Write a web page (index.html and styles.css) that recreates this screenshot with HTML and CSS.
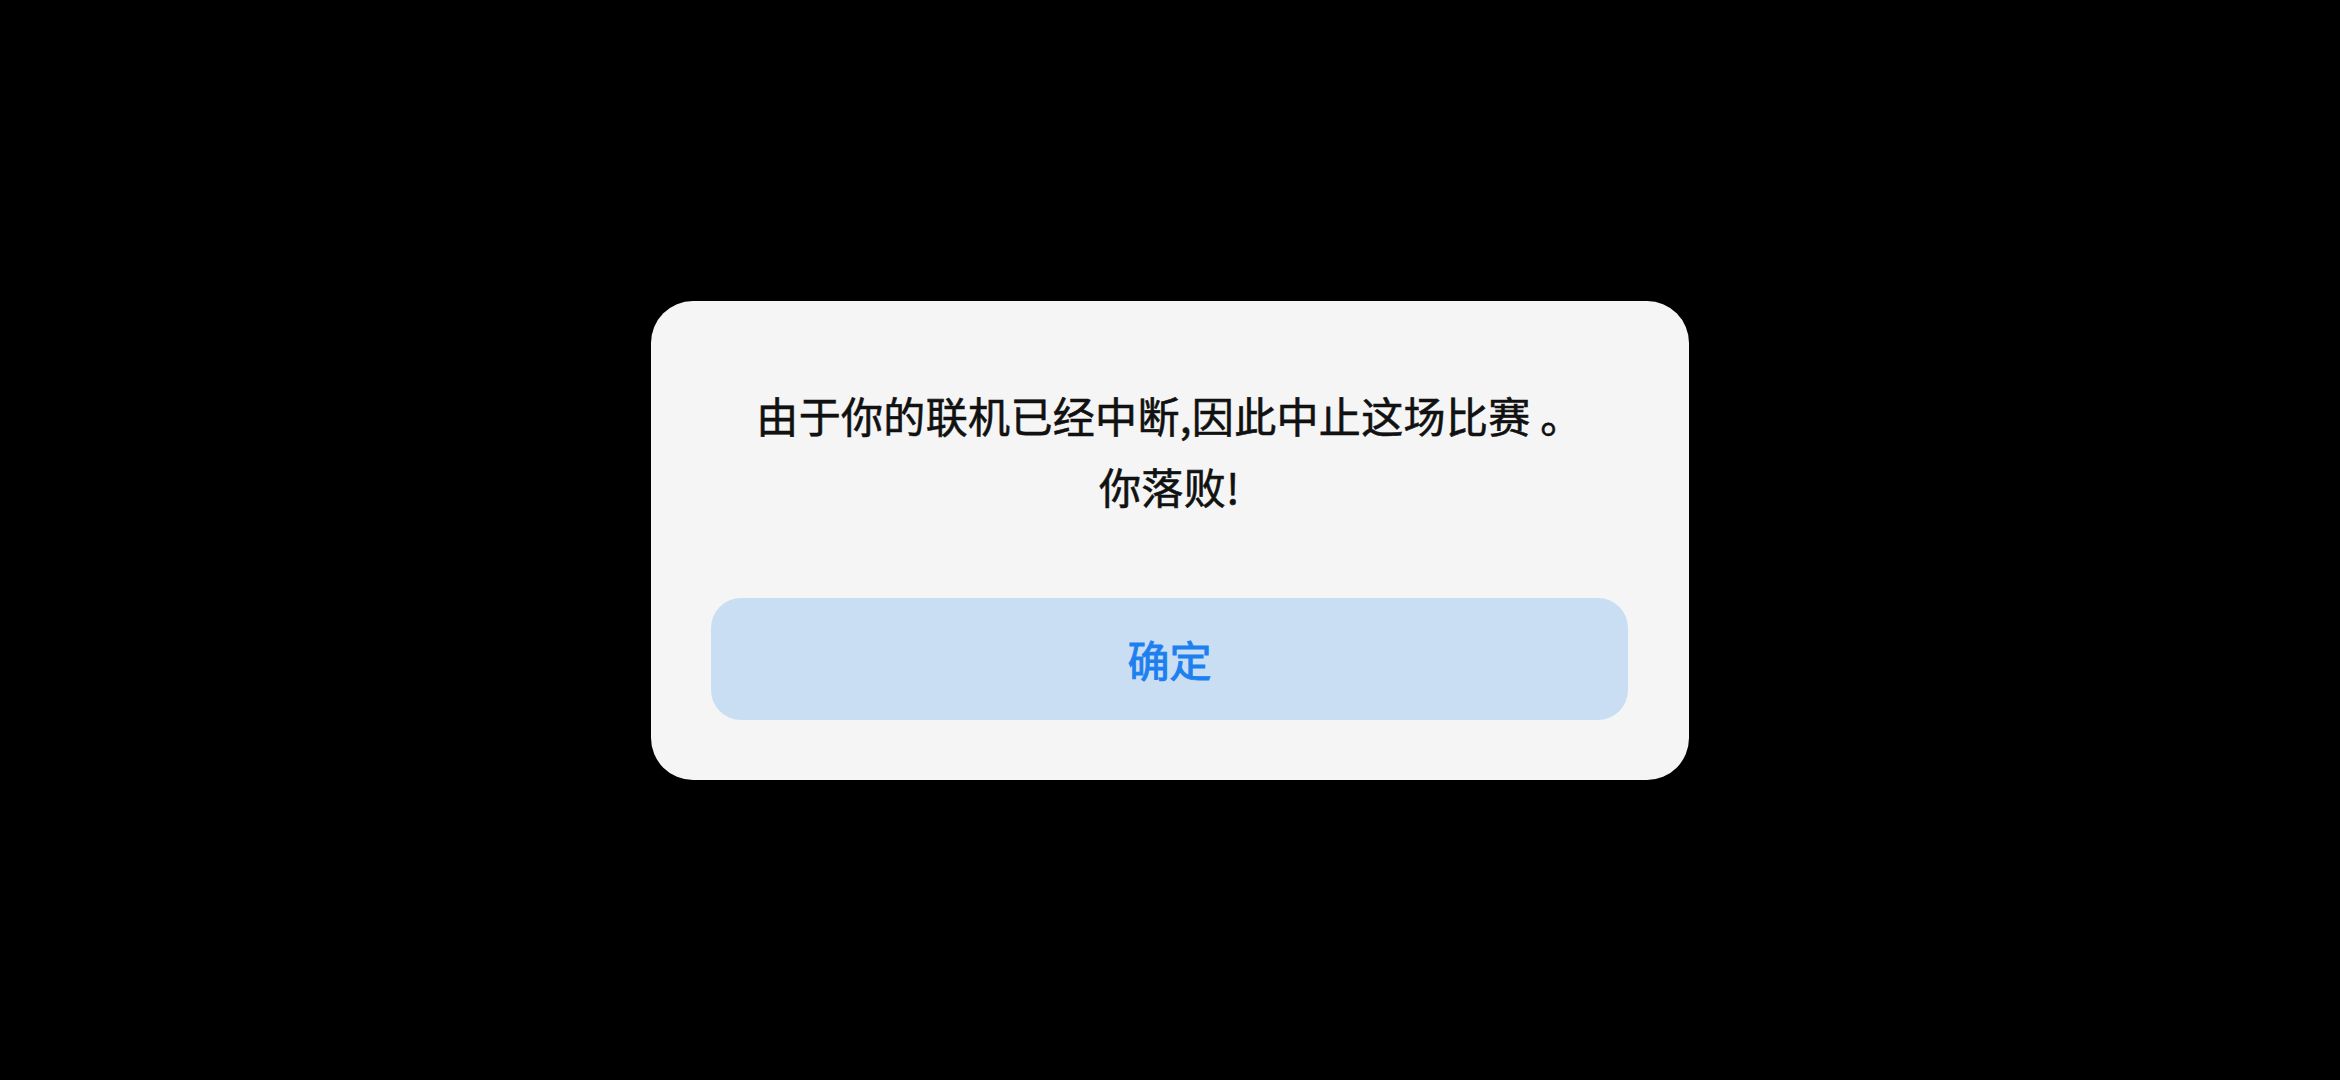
FILE: index.html
```html
<!DOCTYPE html>
<html lang="zh-CN">
<head>
<meta charset="utf-8">
<title>对话框</title>
<link rel="stylesheet" href="styles.css">
</head>
<body>
<div class="screen">
  <div class="dialog">
    <div class="message">
      <p class="line">由于你的联机已经中断,因此中止这场比赛 。</p>
      <p class="line">你落败!</p>
    </div>
    <button class="confirm" type="button">确定</button>
  </div>
</div>
</body>
</html>
```

FILE: styles.css
```css
html, body {
  margin: 0;
  padding: 0;
  background: #000000;
}

.screen {
  width: 100vw;
  height: 100vh;
  display: flex;
  align-items: center;
  justify-content: center;
}

.dialog {
  width: 1038px;
  box-sizing: border-box;
  padding: 78px 61px 60px 60px;
  background: #f5f5f5;
  border-radius: 42px;
  display: flex;
  flex-direction: column;
  font-family: "Noto Sans CJK SC", "Noto Sans", sans-serif;
}

.message {
  text-align: center;
  color: #111111;
  font-size: 42px;
  letter-spacing: 0.35px;
  line-height: 71px;
  font-weight: 400;
  -webkit-text-stroke: 0.6px #111111;
}

.line {
  margin: 0;
}

.confirm {
  margin-top: 77px;
  height: 122px;
  border: none;
  border-radius: 30px;
  background: #cadef3;
  color: #1c80f0;
  font-family: "Noto Sans CJK SC", "Noto Sans", sans-serif;
  font-size: 42px;
  font-weight: 400;
  -webkit-text-stroke: 1px #1c80f0;
  padding: 0;
}
```
